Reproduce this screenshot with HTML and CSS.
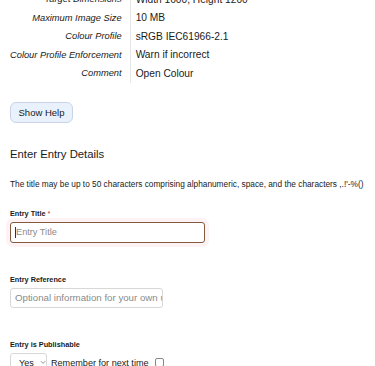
FILE: index.html
```html
<!DOCTYPE html>
<html>
<head>
<meta charset="utf-8">
<link rel="stylesheet" href="styles.css">
</head>
<body>
<div class="page">
  <table class="specs">
    <tr><th>Target Dimensions</th><td>Width 1600, Height 1200</td></tr>
    <tr><th>Maximum Image Size</th><td>10 MB</td></tr>
    <tr><th>Colour Profile</th><td>sRGB IEC61966-2.1</td></tr>
    <tr><th>Colour Profile Enforcement</th><td>Warn if incorrect</td></tr>
    <tr><th>Comment</th><td>Open Colour</td></tr>
  </table>

  <button class="help-btn" type="button">Show Help</button>

  <h2 class="section-title">Enter Entry Details</h2>

  <p class="hint">The title may be up to 50 characters comprising alphanumeric, space, and the characters ,.!'-%()</p>

  <div class="field">
    <label class="field-label">Entry Title <span class="req">*</span></label>
    <div class="input input-focus"><span class="caret"></span><span class="ph">Entry Title</span></div>
  </div>

  <div class="field">
    <label class="field-label">Entry Reference</label>
    <div class="input input-ref"><span class="ph">Optional information for your own use</span></div>
  </div>

  <div class="field">
    <label class="field-label">Entry is Publishable</label>
    <div class="pub-row">
      <div class="select">Yes <svg class="chev" width="7" height="5" viewBox="0 0 7 5"><path d="M1 1l2.5 2.5L6 1" fill="none" stroke="#888" stroke-width="1"/></svg></div>
      <span class="remember">Remember for next time</span>
      <span class="checkbox"></span>
    </div>
  </div>
</div>
</body>
</html>
```
FILE: styles.css
```css
html, body {
  margin: 0;
  padding: 0;
  background: #fff;
}
body {
  font-family: "Liberation Sans", Arial, Helvetica, sans-serif;
  color: #1a1a1a;
  overflow: hidden;
}
.page {
  padding: 0 10px;
  margin-top: -10px;
}
.specs {
  border-collapse: collapse;
  font-size: 10.2px;
}
.specs th {
  font-weight: normal;
  font-style: italic;
  font-size: 9.3px;
  text-align: right;
  padding: 2px 8px 2px 0;
  height: 14.5px;
  border-right: 1px solid #e6e6e6;
  white-space: nowrap;
}
.specs td {
  padding: 2px 0 2px 5px;
  height: 14.5px;
  white-space: nowrap;
}
.help-btn {
  display: block;
  margin-top: 19px;
  width: 63px;
  height: 21px;
  padding: 0;
  font-family: inherit;
  font-size: 9.5px;
  color: #1a1a1a;
  background: #e9f1fc;
  border: 1px solid #c9d5e6;
  border-radius: 6px;
}
.section-title {
  font-size: 11.3px;
  font-weight: normal;
  margin: 23px 0 0;
  line-height: 16px;
}
.hint {
  font-size: 8.3px;
  margin: 17px 0 0;
  line-height: 11px;
  white-space: nowrap;
}
.field {
  margin-top: 19px;
}
.field + .field {
  margin-top: 32px;
}
.field-label {
  display: block;
  font-size: 7.3px;
  font-weight: bold;
  line-height: 10px;
  margin-bottom: 3px;
}
.req {
  color: #c0392b;
  font-weight: normal;
}
.input {
  box-sizing: border-box;
  height: 21px;
  border: 1px solid #d8d8d8;
  border-radius: 3px;
  display: flex;
  align-items: center;
  padding: 0 4px;
  font-size: 9.2px;
  overflow: hidden;
  white-space: nowrap;
}
.ph {
  color: #8a8a8a;
}
.input-focus {
  width: 195px;
  border: 1.5px solid #83593f;
  box-shadow: 0 0 0 4px #fdf2f4;
  padding-left: 4px;
}
.caret {
  display: inline-block;
  width: 1px;
  height: 11px;
  background: #333;
}
.input-ref {
  width: 153px;
  height: 20px;
  padding-left: 4px;
  font-size: 9.7px;
}
.pub-row {
  display: flex;
  align-items: center;
  gap: 4px;
  font-size: 9.1px;
}
.select {
  box-sizing: border-box;
  width: 37px;
  height: 20px;
  border: 1px solid #d8d8d8;
  border-radius: 3px;
  display: flex;
  align-items: center;
  padding-left: 8px;
  gap: 6px;
}
.checkbox {
  display: inline-block;
  width: 7px;
  height: 7px;
  border: 1px solid #888;
  border-radius: 2px;
  margin-left: 2px;
}
```
